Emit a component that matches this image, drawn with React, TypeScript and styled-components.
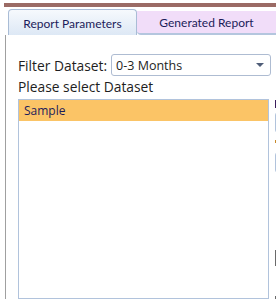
import React from 'react';
import styled, { createGlobalStyle } from 'styled-components';

const GlobalStyle = createGlobalStyle`
  html, body {
    margin: 0;
    padding: 0;
    background: #ffffff;
    overflow: hidden;
  }
  body {
    font-family: 'Open Sans', 'Noto Sans', sans-serif;
    font-size: 13px;
    color: #1e1e1e;
  }
`;

const Page = styled.div`
  width: 276px;
  height: 299px;
  padding-top: 3px;
  box-sizing: border-box;
  overflow: hidden;
`;

const TopBar = styled.div`
  margin-left: 4px;
  height: 4px;
  background: #9b6b65;
`;

const TabStrip = styled.div`
  display: flex;
  align-items: flex-end;
  height: 28px;
  margin-left: 8px;
`;

const Tab = styled.div<{ $active?: boolean }>`
  display: flex;
  align-items: center;
  justify-content: center;
  box-sizing: border-box;
  height: ${p => (p.$active ? '26px' : '24px')};
  width: ${p => (p.$active ? '129px' : 'auto')};
  flex: ${p => (p.$active ? 'none' : '1')};
  border-top: ${p => (p.$active ? '1px solid #a9bcd6' : 'none')};
  border-bottom: ${p => (p.$active ? 'none' : '2px solid #b4c6de')};
  border-left: ${p => (p.$active ? '1px solid #a9bcd6' : 'none')};
  border-right: ${p => (p.$active ? '1px solid #a9bcd6' : 'none')};
  border-radius: ${p => (p.$active ? '4px 4px 0 0' : '0 0 0 4px')};
  background: ${p =>
    p.$active
      ? 'linear-gradient(#f6f9fd, #dde8f5)'
      : '#f1ddf9'};
  color: #1c1c5a;
  font-family: Lato, 'Open Sans', sans-serif;
  font-size: 12px;
  padding-top: ${p => (p.$active ? '1px' : '0')};
  white-space: nowrap;
`;

const Panel = styled.div`
  margin-left: 5px;
  border-left: 1px solid #a0a0a0;
  padding: 19px 0 0 12px;
  display: flex;
  gap: 6px;
  height: 280px;
`;

const MainColumn = styled.div`
  display: flex;
  flex-direction: column;
  width: 251px;
  flex: none;
`;

const FilterRow = styled.div`
  display: flex;
  align-items: center;
  gap: 4px;
  height: 22px;
`;

const Label = styled.span`
  font-size: 13.8px;
  color: #1e1e1e;
  white-space: nowrap;
`;

const Select = styled.div`
  box-sizing: border-box;
  width: 160px;
  height: 22px;
  flex: none;
  border: 1px solid #aebcd2;
  border-radius: 3px;
  display: flex;
  align-items: center;
  justify-content: space-between;
  padding: 0 6px 0 4px;
  font-size: 12.5px;
  color: #1e1e1e;
  background: #fff;
`;

const Arrow = styled.span`
  width: 0;
  height: 0;
  border-left: 4px solid transparent;
  border-right: 4px solid transparent;
  border-top: 4px solid #4f5d78;
`;

const Caption = styled.div`
  font-size: 13.8px;
  margin-top: 2px;
  height: 21px;
  line-height: 18px;
`;

const ListBox = styled.div`
  box-sizing: border-box;
  width: 251px;
  height: 200px;
  border: 1px solid #b1c3dc;
  background: #fff;
`;

const ListItem = styled.div<{ $selected?: boolean }>`
  height: 21px;
  line-height: 21px;
  padding-left: 5px;
  background: ${p => (p.$selected ? '#fbc466' : 'transparent')};
  color: #1c1c5a;
  font-size: 12px;
`;

const SideColumn = styled.div`
  display: flex;
  flex-direction: column;
  padding-top: 46px;
  flex: none;
  width: 60px;
`;

const SideLabel = styled.div<{ $color: string; $short?: boolean }>`
  width: 3px;
  height: ${p => (p.$short ? '3px' : '8px')};
  background: ${p => p.$color};
  margin-bottom: ${p => (p.$short ? '9px' : '4px')};
`;

const SideInput = styled.div`
  box-sizing: border-box;
  width: 60px;
  height: 21px;
  border: 1px solid #b1c3dc;
  border-radius: 3px;
  margin-bottom: 7px;
`;

const SideButton = styled.div`
  margin-top: 70px;
  width: 2px;
  height: 16px;
  background: #6a6a6a;
`;

const SideTick = styled.div`
  margin-top: 30px;
  width: 2px;
  height: 3px;
  background: #6a6a6a;
`;

export default function App() {
  return (
    <Page>
      <GlobalStyle />
      <TopBar />
      <TabStrip>
        <Tab $active>Report Parameters</Tab>
        <Tab>Generated Report</Tab>
      </TabStrip>
      <Panel>
        <MainColumn>
          <FilterRow>
            <Label>Filter Dataset:</Label>
            <Select>
              0-3 Months
              <Arrow />
            </Select>
          </FilterRow>
          <Caption>Please select Dataset</Caption>
          <ListBox>
            <ListItem $selected>Sample</ListItem>
          </ListBox>
        </MainColumn>
        <SideColumn>
          <SideLabel $color="#3b1d5c" />
          <SideInput />
          <SideLabel $color="#c88a2a" $short />
          <SideInput />
          <SideButton />
          <SideTick />
        </SideColumn>
      </Panel>
    </Page>
  );
}
